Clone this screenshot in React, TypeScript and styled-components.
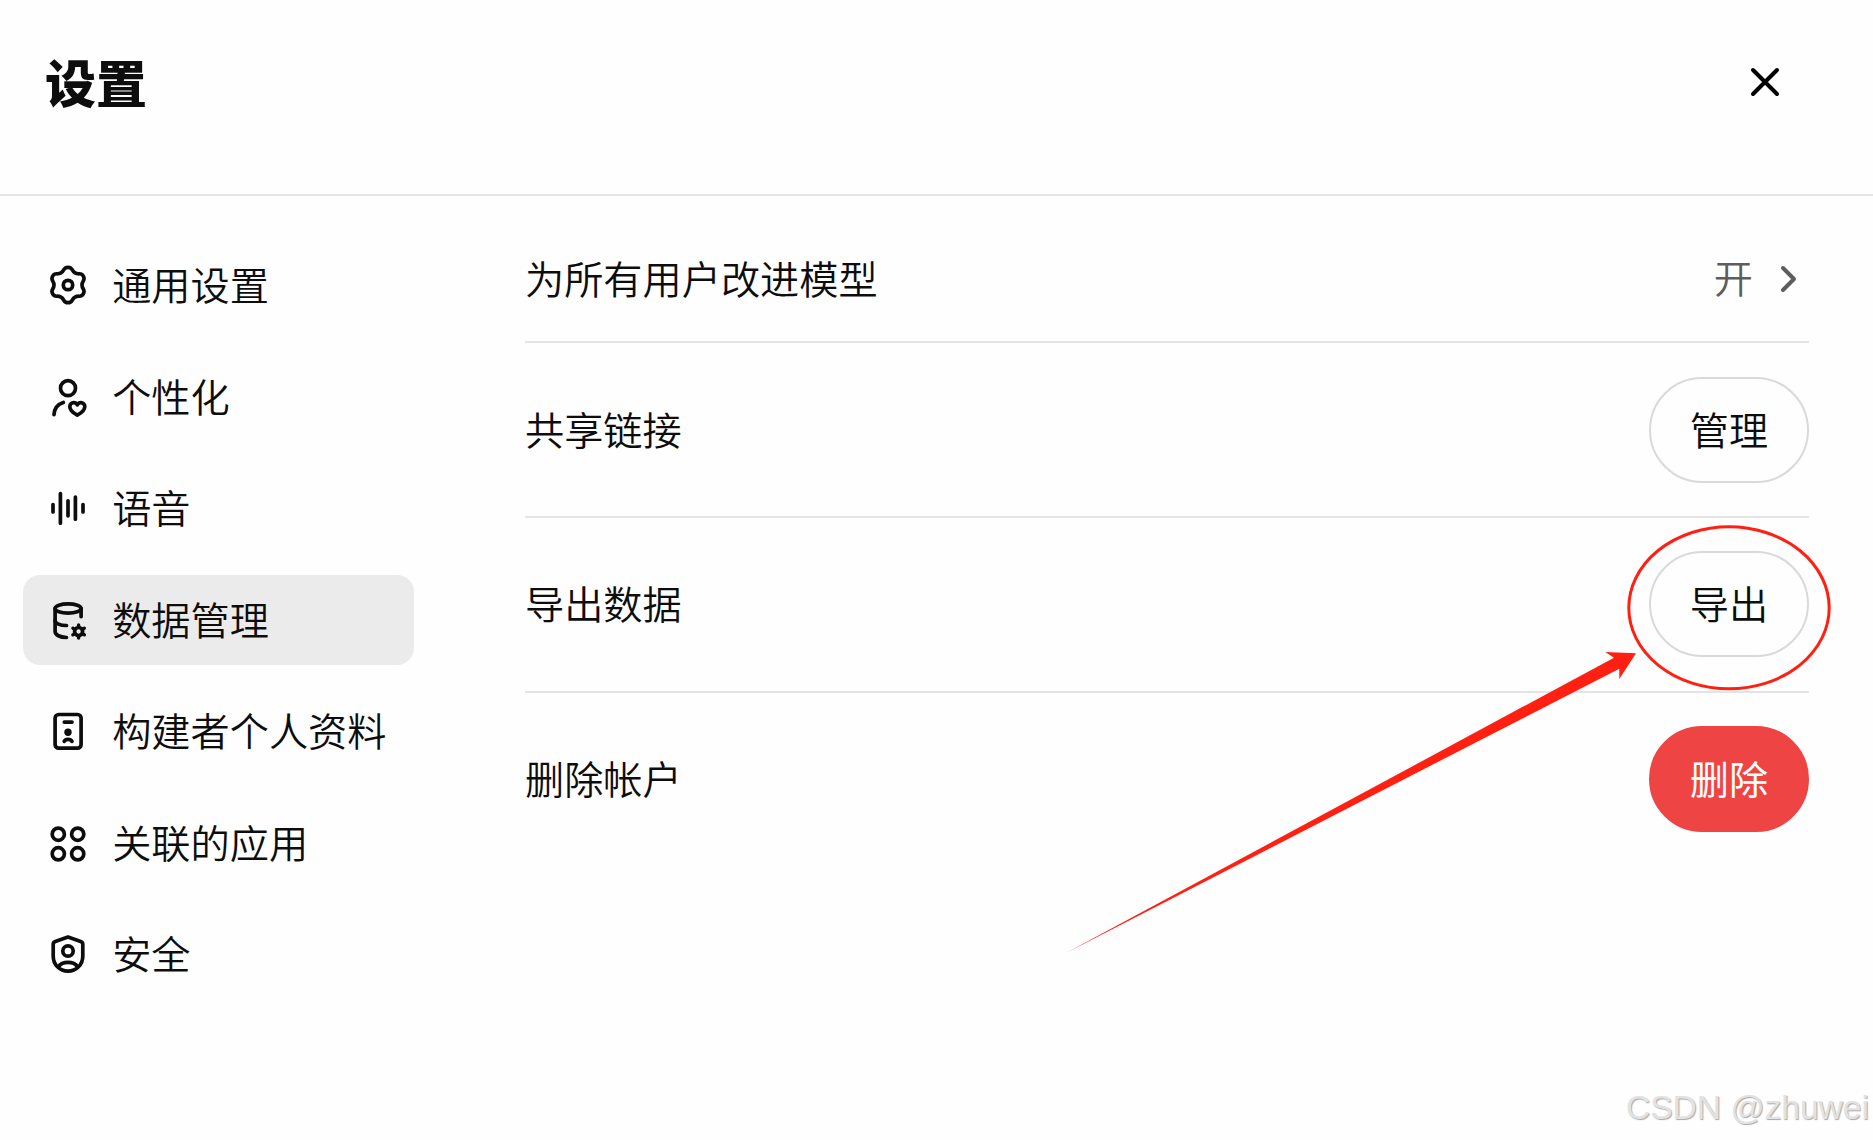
import { FC, ReactNode, Fragment } from 'react'

import styled, { createGlobalStyle } from 'styled-components'

type MenuItem = {
  label: string
  icon: ReactNode
  active?: boolean
}

// one lobe every 60deg, tangents stay perpendicular to the radius
const gearPath = (() => {
  const at = (deg: number, r: number, t: number) => {
    const a = (deg * Math.PI) / 180
    const x = 24 + r * Math.cos(a) - t * Math.sin(a)
    const y = 24 + r * Math.sin(a) + t * Math.cos(a)
    return `${x.toFixed(2)} ${y.toFixed(2)}`
  }
  let d = `M${at(-90, 17.7, 0)}`
  for (let i = 0; i < 6; i++) {
    const a = -90 + i * 60
    d += `C${at(a, 17.7, 5)} ${at(a + 30, 14, -4.6)} ${at(a + 30, 14, 0)}`
    d += `C${at(a + 30, 14, 4.6)} ${at(a + 60, 17.7, -5)} ${at(a + 60, 17.7, 0)}`
  }
  return `${d}Z`
})()

const menu: MenuItem[] = [
  {
    label: '通用设置',
    icon: (
      <Fragment>
        <path d={gearPath} />
        <circle cx="24" cy="24" r="4.7" />
      </Fragment>
    ),
  },
  {
    label: '个性化',
    icon: (
      <Fragment>
        <circle cx="24" cy="15.2" r="7.5" />
        <path d="M10 41.6C10.3 35.8 14 31.2 19.3 29.5" />
        <path d="M33.3 42.2C29 40 25.8 37 25.8 33.6C25.8 31.2 27.6 29.7 29.6 29.7C31.2 29.7 32.6 30.6 33.3 31.8C34 30.6 35.4 29.7 37 29.7C39 29.7 40.8 31.2 40.8 33.6C40.8 37 37.6 40 33.3 42.2Z" />
      </Fragment>
    ),
  },
  {
    label: '语音',
    icon: <path d="M9 20.5V28M16.4 9.6V39.2M24 16.8V31.8M31.4 13V35.2M39 20.5V28" />,
  },
  {
    label: '数据管理',
    active: true,
    icon: (
      <Fragment>
        <ellipse cx="24.1" cy="12.5" rx="13" ry="4.6" />
        <path d="M11.1 12.5V35.5C11.1 39 16 41.3 22.5 41.5" />
        <path d="M11.1 24.5C11.1 27.5 16 29.5 22.5 29.5" />
        <path d="M37.1 12.5V20.6" />
        <circle cx="34.6" cy="35.5" r="4" strokeWidth="3.7" />
        <path
          strokeWidth="3.4"
          d="M34.6 31V29M34.6 40V42M38.5 33.2L40.3 32.2M30.7 37.8L28.9 38.8M38.5 37.8L40.3 38.8M30.7 33.2L28.9 32.2"
        />
      </Fragment>
    ),
  },
  {
    label: '构建者个人资料',
    icon: (
      <Fragment>
        <rect x="11.1" y="7.5" width="26" height="33.7" rx="3.6" />
        <path d="M20.3 15.1H28" />
        <circle cx="24" cy="25.3" r="3.7" fill="currentColor" stroke="none" />
        <path d="M20.2 34.4C21.6 31.6 26.6 31.6 28 34.4" />
      </Fragment>
    ),
  },
  {
    label: '关联的应用',
    icon: (
      <Fragment>
        <circle cx="14.3" cy="15.2" r="6.1" />
        <circle cx="33.7" cy="15.2" r="6.1" />
        <circle cx="14.3" cy="34.8" r="6.1" />
        <circle cx="33.7" cy="34.8" r="6.1" />
      </Fragment>
    ),
  },
  {
    label: '安全',
    icon: (
      <Fragment>
        <path d="M24 7L36.7 11.4C38 11.9 38.8 12.8 38.8 14.3V26C38.8 34.6 32.4 41.2 24 41.2C15.6 41.2 9.2 34.6 9.2 26V14.3C9.2 12.8 10 11.9 11.3 11.4Z" />
        <circle cx="24" cy="21" r="5.2" />
        <path d="M14.5 36.6C18.3 31 29.7 31 33.5 36.6" />
      </Fragment>
    ),
  },
]

const App: FC = () => (
  <Fragment>
    <GlobalLayout />
    <Layout>
      <Header>
        <Title>设置</Title>
        <CloseButton aria-label="关闭">
          <svg width="36" height="36" viewBox="0 0 36 36">
            <path d="M6 6L30 30M30 6L6 30" />
          </svg>
        </CloseButton>
      </Header>
      <Body>
        <SideNav>
          {menu.map(({ label, icon, active }) => (
            <SideNavItem key={label} $active={active}>
              <MenuIcon viewBox="0 0 48 48">{icon}</MenuIcon>
              <MenuLabel>{label}</MenuLabel>
            </SideNavItem>
          ))}
        </SideNav>
        <Content>
          <Row $compact>
            <RowLabel>为所有用户改进模型</RowLabel>
            <RowValue>
              <span>开</span>
              <svg width="20" height="32" viewBox="0 0 20 32">
                <path d="M4 5L15 16L4 27" />
              </svg>
            </RowValue>
          </Row>
          <Row>
            <RowLabel>共享链接</RowLabel>
            <PillButton>管理</PillButton>
          </Row>
          <Row>
            <RowLabel>导出数据</RowLabel>
            <PillButton>导出</PillButton>
          </Row>
          <Row>
            <RowLabel>删除帐户</RowLabel>
            <PillButton $danger>删除</PillButton>
          </Row>
        </Content>
      </Body>
      <Annotation viewBox="0 0 1873 1140">
        <ellipse cx="1729" cy="607.8" rx="100.2" ry="81" />
        <path d="M1066 953L1614 657.7L1605.3 652L1636 653.3L1619.3 679V668.7Z" />
      </Annotation>
      <Watermark>CSDN @zhuwei</Watermark>
    </Layout>
  </Fragment>
)

const GlobalLayout = createGlobalStyle`
  body {
    margin: 0;
    background-color: #fefefe;
    color: #0d0d0d;
    font-family: 'Noto Sans CJK SC', sans-serif;
    font-weight: 350;
    overflow: hidden;
  }
`

const Layout = styled.div`
  position: relative;
  width: 1873px;
  height: 1140px;
  overflow: hidden;
`

const Header = styled.header`
  display: flex;
  justify-content: space-between;
  box-sizing: border-box;
  height: 196px;
  padding: 51px 90.5px 0 45px;
  border-bottom: 2px solid #e4e4e4;
`

const Title = styled.h2`
  margin: 0;
  font-size: 51px;
  line-height: 60px;
  font-weight: 900;
`

const CloseButton = styled.button`
  height: 36px;
  margin-top: 13px;
  padding: 0;
  border: 0;
  background: none;

  svg {
    display: block;
    fill: none;
    stroke: #000;
    stroke-width: 4;
    stroke-linecap: round;
  }
`

const Body = styled.div`
  display: flex;
`

const SideNav = styled.nav`
  display: flex;
  flex-direction: column;
  gap: 21.5px;
  width: 391px;
  padding: 44px 111px 0 23px;
`

const SideNavItem = styled.div<{ $active?: boolean }>`
  display: flex;
  align-items: center;
  gap: 20.5px;
  box-sizing: border-box;
  height: 90px;
  padding-left: 20.7px;
  border-radius: 17px;
  background-color: ${({ $active }) => ($active ? '#ebebeb' : 'transparent')};
`

const MenuIcon = styled.svg`
  flex: none;
  width: 48px;
  height: 48px;
  fill: none;
  stroke: currentColor;
  stroke-width: 3.7;
  stroke-linecap: round;
  stroke-linejoin: round;
`

const MenuLabel = styled.span`
  padding-bottom: 4px;
  font-size: 39.2px;
  white-space: nowrap;
`

const Content = styled.main`
  width: 1284px;
`

const Row = styled.div<{ $compact?: boolean }>`
  display: flex;
  align-items: center;
  justify-content: space-between;
  box-sizing: border-box;
  height: ${({ $compact }) => ($compact ? 147.4 : 174.8)}px;
  padding: ${({ $compact }) => ($compact ? '21px 0 0' : '0 0 0.4px')};
  border-bottom: 2px solid #e4e4e4;

  &:last-child {
    border-bottom-color: transparent;
  }
`

const RowLabel = styled.span`
  padding-bottom: 4px;
  font-size: 39.2px;
`

const RowValue = styled.span`
  display: flex;
  align-items: center;
  gap: 26px;
  padding-right: 10px;
  font-size: 39.2px;
  color: #5d5d5d;

  span {
    padding-bottom: 7px;
  }

  svg {
    fill: none;
    stroke: currentColor;
    stroke-width: 4;
    stroke-linecap: round;
    stroke-linejoin: round;
  }
`

const PillButton = styled.button<{ $danger?: boolean }>`
  box-sizing: border-box;
  width: 160px;
  height: 106px;
  padding: 0 0 4px;
  border: 2px solid ${({ $danger }) => ($danger ? '#ef4444' : '#d9d9d9')};
  border-radius: 53px;
  background-color: ${({ $danger }) => ($danger ? '#ef4444' : 'transparent')};
  color: ${({ $danger }) => ($danger ? '#fff' : '#0d0d0d')};
  font-family: inherit;
  font-size: 39.2px;
  font-weight: ${({ $danger }) => ($danger ? 400 : 'inherit')};
`

// hand drawn marker over the export button
const Annotation = styled.svg`
  position: absolute;
  inset: 0;
  pointer-events: none;

  ellipse {
    fill: none;
    stroke: #ff2012;
    stroke-width: 3;
  }

  path {
    fill: #ff2012;
  }
`

const Watermark = styled.div`
  position: absolute;
  right: 4px;
  bottom: 12.5px;
  font-family: 'Liberation Sans', Arial, sans-serif;
  font-size: 33.6px;
  line-height: 40px;
  color: #e2e2e2;
  text-shadow: 1px 1px 1px #a8a8a8;
`

export default App
